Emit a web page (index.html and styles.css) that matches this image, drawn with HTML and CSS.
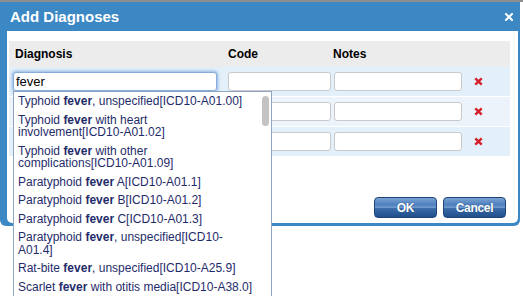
FILE: index.html
```html
<!DOCTYPE html>
<html>
<head>
<meta charset="utf-8">
<link rel="stylesheet" href="styles.css">
</head>
<body>
<div class="topline"></div>
<div class="dialog">
  <div class="titlebar">
    <span class="title">Add Diagnoses</span>
    <svg class="close" width="8" height="8" viewBox="0 0 8 8"><path d="M1 1L7 7M7 1L1 7" stroke="#fff" stroke-width="2" stroke-linecap="square"/></svg>
  </div>
  <div class="content">
    <div class="table">
      <div class="row head">
        <div class="lbl first">Diagnosis</div>
        <div class="lbl">Code</div>
        <div class="lbl notes">Notes</div>
        <div></div>
      </div>
      <div class="row odd">
        <div class="ac">
          <input class="inp diag focus" value="fever">
          <ul class="menu">
            <li>Typhoid <b>fever</b>, unspecified[ICD10-A01.00]</li>
            <li>Typhoid <b>fever</b> with heart<br>involvement[ICD10-A01.02]</li>
            <li>Typhoid <b>fever</b> with other<br>complications[ICD10-A01.09]</li>
            <li>Paratyphoid <b>fever</b> A[ICD10-A01.1]</li>
            <li>Paratyphoid <b>fever</b> B[ICD10-A01.2]</li>
            <li>Paratyphoid <b>fever</b> C[ICD10-A01.3]</li>
            <li>Paratyphoid <b>fever</b>, unspecified[ICD10-<br>A01.4]</li>
            <li>Rat-bite <b>fever</b>, unspecified[ICD10-A25.9]</li>
            <li>Scarlet <b>fever</b> with otitis media[ICD10-A38.0]</li>
            <li>Scarlet <b>fever</b> with other complications[ICD10-A38.8]</li>
          </ul>
          <div class="thumb"></div>
        </div>
        <input class="inp code">
        <input class="inp note">
        <svg class="del" width="9" height="9" viewBox="0 0 9 9"><path d="M1.3 1.3L7.7 7.7M7.7 1.3L1.3 7.7" stroke="#d5202a" stroke-width="2.4"/></svg>
      </div>
      <div class="row even">
        <input class="inp diag">
        <input class="inp code">
        <input class="inp note">
        <svg class="del" width="9" height="9" viewBox="0 0 9 9"><path d="M1.3 1.3L7.7 7.7M7.7 1.3L1.3 7.7" stroke="#d5202a" stroke-width="2.4"/></svg>
      </div>
      <div class="row odd">
        <input class="inp diag">
        <input class="inp code">
        <input class="inp note">
        <svg class="del" width="9" height="9" viewBox="0 0 9 9"><path d="M1.3 1.3L7.7 7.7M7.7 1.3L1.3 7.7" stroke="#d5202a" stroke-width="2.4"/></svg>
      </div>
    </div>
    <div class="footer">
      <button class="btn">OK</button>
      <button class="btn">Cancel</button>
    </div>
  </div>
</div>
</body>
</html>
```
FILE: styles.css
```css
html, body {
  margin: 0;
  padding: 0;
  background: #ffffff;
  overflow: hidden;
  width: 523px;
  height: 296px;
  font-family: "Liberation Sans", Arial, sans-serif;
}
.topline {
  height: 2px;
  background: #8e8e8e;
}
.dialog {
  width: 520px;
  background: #3c88c5;
  border-radius: 0 0 6px 6px;
  padding-bottom: 3px;
}
.titlebar {
  height: 29px;
  display: flex;
  align-items: center;
  justify-content: space-between;
  padding: 0 7px 0 10px;
}
.title {
  color: #fff;
  font-weight: bold;
  font-size: 15px;
}
.close {
  display: block;
  margin-top: 1px;
}
.content {
  margin: 0 2px 0 7px;
  background: #fff;
  height: 182px;
  padding: 10px 8px 0 2px;
  border-radius: 0 0 5px 5px;
  display: flex;
  flex-direction: column;
}
.table {
  display: flex;
  flex-direction: column;
}
.row {
  display: grid;
  grid-template-columns: 215px 106px 140px 1fr;
  align-items: center;
  padding-left: 4px;
  height: 29px;
}
.row.head {
  background: #ececec;
  height: 26px;
  margin-bottom: 0;
}
.row.odd { background: #e3eff9; }
.row.even { background: #edf3fb; }
.row + .row.even, .row.even + .row.odd { margin-top: 1px; }
.lbl {
  font-weight: bold;
  font-size: 12px;
  color: #000;
}
.lbl.first { padding-left: 2px; }
.lbl.notes { margin-left: -1px; }
.inp {
  box-sizing: border-box;
  height: 19px;
  border: 1px solid #c9c9c9;
  border-radius: 3px;
  background: #fff;
  font-family: "Liberation Sans", Arial, sans-serif;
  font-size: 13px;
  padding: 0 2px;
  margin: 0;
  outline: none;
  color: #000;
}
.diag { width: 204px; }
.code { width: 103px; }
.note { width: 128px; }
.focus {
  border-color: #87acd9;
  box-shadow: 0 0 3px 1px #8db5e6;
}
.ac {
  position: relative;
  width: 204px;
  height: 19px;
}
.ac .inp { display: block; }
.menu {
  position: absolute;
  top: 19px;
  left: 0;
  width: 257px;
  margin: 0;
  padding: 0;
  list-style: none;
  background: #fff;
  border: 1px solid #8fa6c2;
  z-index: 10;
  font-size: 12px;
  color: #1f2c6b;
}
.menu li {
  padding: 3px 4px;
  line-height: 12.5px;
  white-space: nowrap;
}
.menu b { font-weight: bold; }
.thumb {
  position: absolute;
  z-index: 11;
  top: 24px;
  left: 249px;
  width: 7px;
  height: 30px;
  border-radius: 4px;
  background: #c3c3c3;
}
.del { display: block; }
.footer {
  margin-top: auto;
  display: flex;
  justify-content: flex-end;
  gap: 6px;
  padding: 0 4px 5px 0;
}
.btn {
  box-sizing: border-box;
  width: 63px;
  height: 21px;
  border: 1px solid #1d4577;
  border-radius: 4px;
  background: linear-gradient(#7aa3d3 0%, #4d7fbd 35%, #6f98cb 50%, #3d6ea9 55%, #2a5b98 80%, #234f88 100%);
  color: #fff;
  font-family: "Liberation Sans", Arial, sans-serif;
  font-weight: bold;
  font-size: 12px;
  letter-spacing: -0.3px;
  text-shadow: 0 0 1px #1a3e6b;
  padding: 0;
}
```
